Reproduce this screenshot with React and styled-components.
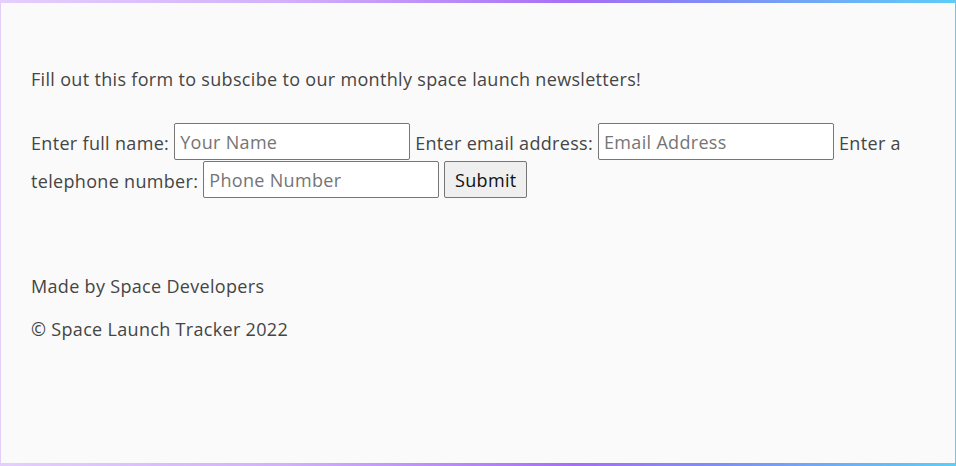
import React from 'react';
import styled, { createGlobalStyle } from 'styled-components';

const GlobalStyle = createGlobalStyle`
    html, body {
        margin: 0;
        padding: 0;
        background: #fafafa;
    }
`;

const Frame = styled.div`
    box-sizing: border-box;
    min-height: 466px;
    width: 956px;
    background: #fafafa;
    border-style: solid;
    border-width: 3px 1px 3px 1px;
    border-image: linear-gradient(to right, #e4cffc 0%, #d2b0fb 30%, #a66ef6 60%, #7f8ef5 75%, #5ccdf7 100%) 1;
    font-family: "Open Sans", "Noto Sans", sans-serif;
    font-size: 18px;
    letter-spacing: 0.32px;
    color: #454545;
`;

const Main = styled.main`
    padding: 0 30px;
`;

const Intro = styled.p`
    margin: 64px 0 0;
    line-height: 25px;
`;

const Form = styled.form`
    margin-top: 31px;
    line-height: 38px;
`;

const Label = styled.label`
    vertical-align: top;
    position: relative;
    top: 1px;
`;

const Field = styled.input`
    box-sizing: border-box;
    width: 236px;
    height: 37px;
    padding: 1px 5px;
    margin: 0;
    border: 1px solid #767676;
    border-radius: 2px;
    background: #fff;
    font-family: inherit;
    font-size: 18px;
    letter-spacing: 0.32px;
    color: #222;
    vertical-align: top;

    &::placeholder {
        color: #757575;
    }
`;

const SubmitButton = styled.button`
    box-sizing: border-box;
    width: 83px;
    height: 37px;
    padding: 1px 6px;
    margin: 0;
    border: 1px solid #767676;
    border-radius: 2px;
    background: #efefef;
    font-family: inherit;
    font-size: 18px;
    letter-spacing: 0.32px;
    color: #111;
    vertical-align: top;
`;

const Footer = styled.footer`
    margin-top: 75px;
`;

const FooterLine = styled.p`
    margin: 0 0 18px;
    line-height: 25px;
`;

export default function App() {
    return (
        <>
            <GlobalStyle />
            <Frame>
                <Main>
                    <Intro>Fill out this form to subscibe to our monthly space launch newsletters!</Intro>
                    <Form onSubmit={(e) => e.preventDefault()}>
                        <Label htmlFor="name">Enter full name:</Label>{' '}
                        <Field id="name" type="text" placeholder="Your Name" />{' '}
                        <Label htmlFor="email">Enter email address:</Label>{' '}
                        <Field id="email" type="email" placeholder="Email Address" />{' '}
                        <Label htmlFor="phone">Enter a telephone number:</Label>{' '}
                        <Field id="phone" type="tel" placeholder="Phone Number" />{' '}
                        <SubmitButton type="submit">Submit</SubmitButton>
                    </Form>
                    <Footer>
                        <FooterLine>Made by Space Developers</FooterLine>
                        <FooterLine>© Space Launch Tracker 2022</FooterLine>
                    </Footer>
                </Main>
            </Frame>
        </>
    );
}
